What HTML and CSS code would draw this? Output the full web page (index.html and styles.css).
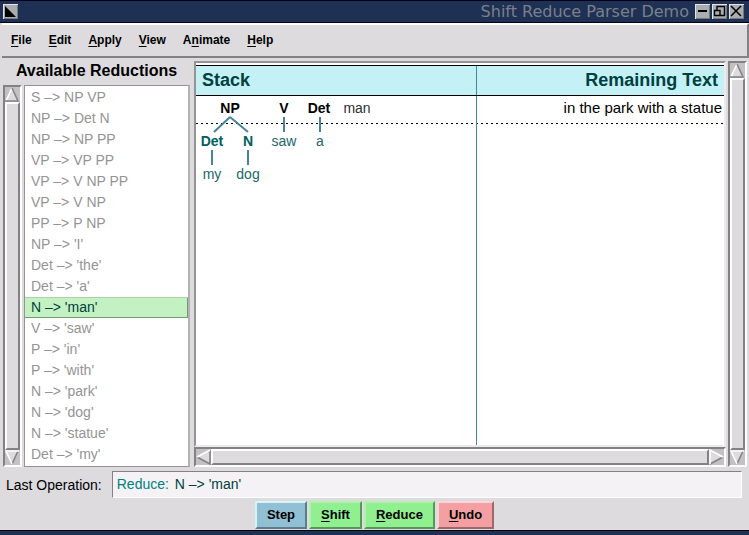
FILE: index.html
```html
<!DOCTYPE html>
<html lang="en">
<head>
<meta charset="utf-8">
<title>Shift Reduce Parser Demo</title>
<link rel="stylesheet" href="styles.css">
</head>
<body>
<header class="titlebar">
  <button class="win" aria-label="Window menu"><svg width="15" height="15" viewBox="0 0 15 15"><path fill="#000" d="M2 2v11h11z"/></svg></button>
  <h1 class="caption">Shift Reduce Parser Demo</h1>
  <div class="win-group">
    <button class="win" aria-label="Minimize"><svg width="15" height="15" viewBox="0 0 15 15"><path fill="#000" d="M3 6h9v2H3z"/></svg></button>
    <button class="win" aria-label="Restore"><svg width="15" height="15" viewBox="0 0 15 15"><path fill="none" stroke="#000" stroke-width="1.4" d="M5 6V2.5h7.5v9H8M2.5 6.5H8v5H2.5z"/></svg></button>
    <button class="win" aria-label="Close"><svg width="15" height="15" viewBox="0 0 15 15"><path stroke="#000" stroke-width="1.5" d="M2 2l10 10M12 2L2 12"/></svg></button>
  </div>
</header>
<nav class="menubar">
  <button><u>F</u>ile</button><button><u>E</u>dit</button><button><u>A</u>pply</button><button><u>V</u>iew</button><button>A<u>n</u>imate</button><button><u>H</u>elp</button>
</nav>
<main class="main">
  <section class="reductions">
    <h2 id="reductions-title">Available Reductions</h2>
    <div class="list-row">
      <div class="bar vertical">
        <button class="arrow" aria-label="Scroll up"><svg width="15" height="15" viewBox="0 0 15 15"><path fill="#dddbde" d="M7 0l7 14H0z"/><path class="lit" d="M1 14L7 1"/><path class="shade" d="M7 1l6 13H0"/></svg></button>
        <div class="thumb"></div>
        <button class="arrow" aria-label="Scroll down"><svg width="15" height="15" viewBox="0 0 15 15"><path fill="#dddbde" d="M0 1h14L7 15z"/><path class="shade" d="M13 1L7 14"/><path class="lit" d="M14 1H1l6 13"/></svg></button>
      </div>
      <ul class="rules" role="listbox" aria-labelledby="reductions-title">
        <li role="option">S –&gt; NP VP</li>
        <li role="option">NP –&gt; Det N</li>
        <li role="option">NP –&gt; NP PP</li>
        <li role="option">VP –&gt; VP PP</li>
        <li role="option">VP –&gt; V NP PP</li>
        <li role="option">VP –&gt; V NP</li>
        <li role="option">PP –&gt; P NP</li>
        <li role="option">NP –&gt; 'I'</li>
        <li role="option">Det –&gt; 'the'</li>
        <li role="option">Det –&gt; 'a'</li>
        <li role="option" aria-selected="true" class="selected">N –&gt; 'man'</li>
        <li role="option">V –&gt; 'saw'</li>
        <li role="option">P –&gt; 'in'</li>
        <li role="option">P –&gt; 'with'</li>
        <li role="option">N –&gt; 'park'</li>
        <li role="option">N –&gt; 'dog'</li>
        <li role="option">N –&gt; 'statue'</li>
        <li role="option">Det –&gt; 'my'</li>
      </ul>
    </div>
  </section>
  <section class="workspace">
    <div class="canvas">
      <div class="heads"><h2>Stack</h2><h2>Remaining Text</h2></div>
      <div class="panes">
        <div class="stack">
          <svg class="tree" width="200" height="100" viewBox="0 0 200 100">
            <path class="edges" d="M34 21L18 36M34 21L52 36M88 21v15M124 21v15M16 54v15M52 54v15"/>
            <g class="top"><text x="34" y="17">NP</text><text x="88" y="17">V</text><text x="123" y="17">Det</text></g>
            <text class="word" x="161" y="17">man</text>
            <g class="node"><text x="16" y="50">Det</text><text x="52" y="50">N</text></g>
            <g class="leaf"><text x="88" y="50">saw</text><text x="124" y="50">a</text><text x="16" y="83">my</text><text x="52" y="83">dog</text></g>
          </svg>
        </div>
        <div class="remaining">in the park with a statue</div>
      </div>
    </div>
    <div class="bar horizontal">
      <button class="arrow" aria-label="Scroll left"><svg width="15" height="16" viewBox="0 0 15 16"><path fill="#dddbde" d="M0 8L14 1v14z"/><path class="shade" d="M14 1v14L1 8"/><path class="lit" d="M1 8L14 1"/></svg></button>
      <div class="thumb"></div>
      <button class="arrow" aria-label="Scroll right"><svg width="15" height="16" viewBox="0 0 15 16"><path fill="#dddbde" d="M1 1l14 7L1 15z"/><path class="shade" d="M14 8L1 15"/><path class="lit" d="M1 15V1l13 7"/></svg></button>
    </div>
  </section>
  <div class="bar vertical outer">
    <button class="arrow" aria-label="Scroll up"><svg width="15" height="15" viewBox="0 0 15 15"><path fill="#dddbde" d="M7 0l7 14H0z"/><path class="lit" d="M1 14L7 1"/><path class="shade" d="M7 1l6 13H0"/></svg></button>
    <div class="thumb"></div>
    <button class="arrow" aria-label="Scroll down"><svg width="15" height="15" viewBox="0 0 15 15"><path fill="#dddbde" d="M0 1h14L7 15z"/><path class="shade" d="M13 1L7 14"/><path class="lit" d="M14 1H1l6 13"/></svg></button>
  </div>
</main>
<div class="status">
  <span>Last Operation:</span>
  <output class="field"><span class="kind">Reduce:</span> N –&gt; 'man'</output>
</div>
<div class="actions">
  <button class="step">Step</button><button class="go"><u>S</u>hift</button><button class="go"><u>R</u>educe</button><button class="undo"><u>U</u>ndo</button>
</div>
<footer class="frame-edge"></footer>
</body>
</html>
```
FILE: styles.css
```css
* { box-sizing: border-box; }
body {
  margin: 0;
  min-height: 100vh;
  display: flex;
  flex-direction: column;
  background: #dddbde;
  color: #000;
  font: 14px/20px "Liberation Sans", Arial, sans-serif;
}
h1, h2 { margin: 0; }
button { margin: 0; padding: 0; font: inherit; color: inherit; border: 0; background: none; }
svg { display: block; }
u { text-decoration-thickness: 1px; text-underline-offset: 2px; }

.titlebar {
  display: flex;
  align-items: center;
  height: 23px;
  padding: 0 5px 0 3px;
  background: #1f3055;
  border-top: 1px solid #000018;
  border-bottom: 1px solid #000010;
}
.caption {
  margin-left: auto;
  margin-right: 6px;
  color: #79808a;
  font: 16px/20px "DejaVu Sans", sans-serif;
}
.win-group { display: flex; gap: 2px; }
.win {
  width: 15px;
  height: 15px;
  background: #a9adb0;
  box-shadow: inset 1px 1px #e0e4e4, inset -1px -1px #74797d;
}

.menubar {
  display: flex;
  gap: 17px;
  height: 35px;
  margin-left: 2px;
  padding: 0 9px 2px;
  border: solid;
  border-width: 2px 2px 2px 0;
  border-color: #fff #838184 #838184 #fff;
  font-weight: bold;
  font-size: 12px;
}

.main { flex: 1; display: flex; min-height: 0; padding: 0 2px 0 3px; }
.reductions { display: flex; flex-direction: column; width: 187px; margin-right: 4px; }
.reductions h2 { height: 27px; padding-top: 3px; font-size: 16px; line-height: 20px; text-align: center; }
.list-row { flex: 1; display: flex; gap: 2px; min-height: 0; }
.rules {
  flex: 1;
  margin: 0;
  padding: 1px 0 0;
  list-style: none;
  background: #fff;
  border: 1px solid #959396;
  border-right: 2px solid #b3b1b4;
  color: #949494;
}
.rules li { height: 21px; padding-left: 6px; line-height: 21px; }
.rules .selected {
  background: #c4f1c1;
  color: #004040;
  box-shadow: inset 0 1px #a9d3a6, inset -1px -1px #719b72;
}

.bar {
  display: flex;
  background: #c3c1c4;
  border: 2px solid;
  border-color: #838184 #fff #fff #838184;
}
.vertical { flex-direction: column; width: 19px; }
.horizontal { height: 20px; }
.thumb {
  flex: 1;
  background: #dddbde;
  border: 2px solid;
  border-color: #fff #838184 #838184 #fff;
}
.lit, .shade { fill: none; stroke-width: 1.6; }
.lit { stroke: #fff; }
.shade { stroke: #838184; }
.outer { margin-top: 3px; margin-left: 2px; }

.workspace { flex: 1; display: flex; flex-direction: column; min-width: 0; padding-top: 3px; }
.canvas {
  flex: 1;
  display: flex;
  flex-direction: column;
  border: 2px solid;
  border-color: #959396 #eceaed #eceaed #959396;
  background: #fff;
}
.heads {
  display: grid;
  grid-template-columns: 53% 1fr;
  height: 31px;
  margin-top: 2px;
  background: #c3f1f5;
  border: solid #000;
  border-width: 1px 0;
  color: #004040;
}
.heads h2 { padding: 0 6px; font-size: 18px; line-height: 28px; }
.heads h2 + h2 { text-align: right; border-left: 1px solid #408898; }
.panes {
  flex: 1;
  display: grid;
  grid-template-columns: 53% 1fr;
  background: repeating-linear-gradient(90deg, #000 0 2px, transparent 2px 5px) 0 27px / 100% 1px no-repeat;
}
.tree { font-size: 14px; text-anchor: middle; }
.edges { fill: none; stroke: #4682a0; stroke-width: 2; }
.top { font-weight: bold; }
.word { fill: #303030; }
.node { fill: #006060; font-weight: bold; }
.leaf { fill: #206868; }
.remaining { padding: 2px 2px 0 0; border-left: 1px solid #408898; text-align: right; font-size: 15px; }

.status { display: flex; align-items: center; gap: 10px; height: 27px; margin-top: 4px; padding: 0 7px 0 6px; }
.field {
  flex: 1;
  height: 27px;
  padding-left: 4px;
  line-height: 25px;
  background: #f4f2f5;
  border: 1px solid;
  border-color: #838184 #fff #fff #838184;
  color: #004040;
}
.kind { color: #008080; margin-right: 2px; }

.actions { display: flex; justify-content: center; gap: 2px; padding: 3px 0 1px; }
.actions button {
  height: 28px;
  padding: 0 10px;
  border: 2px solid;
  font-size: 13px;
  font-weight: bold;
}
.actions .step { background: #91bfd4; border-color: #d5f5fa #5c7e8c #5c7e8c #d5f5fa; }
.actions .go { background: #90f090; border-color: #b4eeb0 #559958 #559958 #b4eeb0; }
.actions .undo { background: #f4a0a2; border-color: #fad5d8 #a16669 #a16669 #fad5d8; }
.frame-edge { height: 5px; background: #1f3055; border-top: 1px solid #000; }
```
